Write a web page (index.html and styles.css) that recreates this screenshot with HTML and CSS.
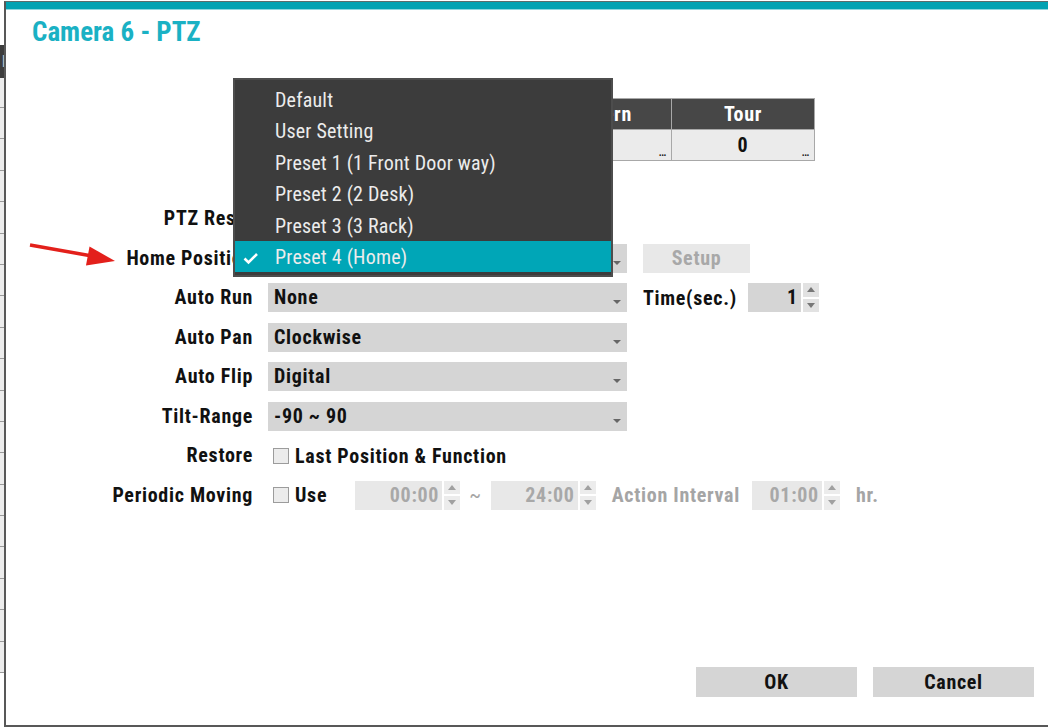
FILE: index.html
```html
<!DOCTYPE html>
<html lang="en">
<head>
  <meta charset="UTF-8" />
  <meta name="viewport" content="width=device-width, initial-scale=1.0"/>
  <title>Camera 6 - PTZ</title>
  <link rel="stylesheet" href="styles.css">
</head>
<body>
  <!-- camera list underneath the dialog -->
  <div class="camera-list">
    <div class="list-head">M</div>
    <div class="list-row"></div><div class="list-row"></div><div class="list-row"></div>
    <div class="list-row"></div><div class="list-row"></div><div class="list-row"></div>
    <div class="list-row"></div><div class="list-row"></div><div class="list-row"></div>
    <div class="list-row"></div><div class="list-row"></div><div class="list-row"></div>
    <div class="list-row"></div><div class="list-row"></div><div class="list-row"></div>
    <div class="list-row"></div><div class="list-row"></div><div class="list-row"></div>
    <div class="list-row"></div>
  </div>

  <div class="dialog">
    <div class="dialog-bar"></div>
    <h1 class="dialog-title">Camera 6 - PTZ</h1>

    <table class="ptz-table">
      <tr><th>Preset</th><th>Pattern</th><th>Tour</th></tr>
      <tr>
        <td>0<span class="more">...</span></td>
        <td>0<span class="more">...</span></td>
        <td>0<span class="more">...</span></td>
      </tr>
    </table>

    <div class="form">
      <div class="label">PTZ Reset</div>
      <div class="field">
        <span class="checkbox"></span>
      </div>

      <div class="label">Home Position</div>
      <div class="field">
        <div class="select">Preset 4 (Home)
          <ul class="menu">
            <li>Default</li>
            <li>User Setting</li>
            <li>Preset 1 (1 Front Door way)</li>
            <li>Preset 2 (2 Desk)</li>
            <li>Preset 3 (3 Rack)</li>
            <li class="is-selected">
              <svg class="tick" width="16" height="13" viewBox="0 0 16 13"><polyline points="1.5,6.5 5.5,10.5 14,2" fill="none" stroke="#fff" stroke-width="2.6"/></svg>
              Preset 4 (Home)
            </li>
          </ul>
        </div>
        <button class="btn btn-setup">Setup</button>
      </div>

      <div class="label">Auto Run</div>
      <div class="field">
        <div class="select">None</div>
        <span class="inline-label">Time(sec.)</span>
        <div class="spin spin-time">
          <div class="spin-value">1</div>
          <div class="spin-arrows"><span class="up"></span><span class="down"></span></div>
        </div>
      </div>

      <div class="label">Auto Pan</div>
      <div class="field"><div class="select">Clockwise</div></div>

      <div class="label">Auto Flip</div>
      <div class="field"><div class="select">Digital</div></div>

      <div class="label">Tilt-Range</div>
      <div class="field"><div class="select">-90 ~ 90</div></div>

      <div class="label">Restore</div>
      <div class="field">
        <span class="checkbox"></span><span class="check-text">Last Position &amp; Function</span>
      </div>

      <div class="label">Periodic Moving</div>
      <div class="field">
        <span class="checkbox"></span><span class="check-text">Use</span>
        <div class="spin is-disabled spin-start">
          <div class="spin-value">00:00</div>
          <div class="spin-arrows"><span class="up"></span><span class="down"></span></div>
        </div>
        <span class="tilde">~</span>
        <div class="spin is-disabled spin-end">
          <div class="spin-value">24:00</div>
          <div class="spin-arrows"><span class="up"></span><span class="down"></span></div>
        </div>
        <span class="inline-label muted">Action Interval</span>
        <div class="spin is-disabled spin-interval">
          <div class="spin-value">01:00</div>
          <div class="spin-arrows"><span class="up"></span><span class="down"></span></div>
        </div>
        <span class="inline-label muted">hr.</span>
      </div>
    </div>

    <div class="dialog-footer">
      <button class="btn btn-main">OK</button>
      <button class="btn btn-main">Cancel</button>
    </div>
  </div>

  <svg class="pointer" width="100" height="40" viewBox="25 235 100 40">
    <line x1="30" y1="245" x2="92" y2="256" stroke="#e3201b" stroke-width="3.5"/>
    <polygon points="89.5,246.5 115,261 86,265.5" fill="#e3201b"/>
  </svg>
</body>
</html>
```

FILE: styles.css
```css
* { margin: 0; padding: 0; box-sizing: border-box; }
body {
  font-family: "Roboto", "Roboto Condensed", sans-serif;
  font-stretch: 87.5%;
  background: #fff;
  color: #111;
  width: 1048px;
  height: 728px;
  overflow: hidden;
  position: relative;
}

/* list behind the modal */
.camera-list {
  width: 200px;
  padding-top: 45px;
}
.list-head {
  height: 33px;
  background: #3d3d3d;
  color: #bbb;
  font-weight: 700;
  padding-left: 2px;
  line-height: 33px;
}
.list-row {
  height: 31.4px;
  background: #ececec;
  border-bottom: 1px solid #9a9a9a;
}
.list-head + .list-row { height: 30px; }

.dialog {
  position: absolute;
  left: 4px;
  top: 1px;
  width: 1060px;
  height: 726px;
  background: #fff;
  border-left: 2px solid #585858;
  border-top: 1px solid #5e6c6c;
  border-bottom: 2px solid #585858;
  display: flex;
  flex-direction: column;
  align-items: flex-start;
}
.dialog-bar {
  align-self: stretch;
  height: 8px;
  background: #02a2b2;
  border-bottom: 1px solid #8fd6dd;
}
.dialog-title {
  font-size: 27px;
  font-weight: 700;
  line-height: 30px;
  color: #1ab1c4;
  padding: 7px 0 0 26px;
}

.ptz-table {
  table-layout: fixed;
  width: 430px;
  border-collapse: collapse;
  margin: 51px 0 0 379px;
  font-size: 20px;
  font-weight: 700;
  letter-spacing: 0.7px;
}
.ptz-table th,
.ptz-table td {
  height: 31px;
  border: 1px solid #a8a8a8;
  text-align: center;
  padding: 0;
}
.ptz-table th {
  background: #474747;
  color: #fff;
}
.ptz-table td {
  background: #ebebeb;
  position: relative;
}
.more {
  position: absolute;
  right: 5px;
  bottom: 3px;
  font-size: 10px;
  line-height: 8px;
  letter-spacing: -0.5px;
}

.form {
  align-self: stretch;
  display: grid;
  grid-template-columns: 193px 1fr;
  grid-auto-rows: 29px;
  column-gap: 15px;
  row-gap: 10.5px;
  margin: 43px 0 0 54px;
  font-size: 20px;
  font-weight: 700;
  letter-spacing: 0.7px;
}
.label {
  text-align: right;
  line-height: 29px;
  white-space: nowrap;
}
.field {
  display: flex;
  align-items: center;
  white-space: nowrap;
}

.select {
  position: relative;
  flex: none;
  width: 359px;
  height: 29px;
  line-height: 29px;
  padding-left: 6px;
  background: #d5d5d5;
}
.select::after {
  content: "";
  position: absolute;
  right: 6px;
  bottom: 8px;
  border-left: 4px solid transparent;
  border-right: 4px solid transparent;
  border-top: 4px solid #666;
}

.menu {
  position: absolute;
  left: -35px;
  top: -166px;
  width: 380px;
  padding: 3.75px 0 2.75px;
  list-style: none;
  background: #3c3c3c;
  border: 2px solid #4d4d4d;
  z-index: 10;
  letter-spacing: 0.2px;
}
.menu li {
  position: relative;
  height: 31.5px;
  line-height: 31.5px;
  padding: 1.5px 0 0 40px;
  font-weight: 400;
  color: #ececec;
}
.menu li.is-selected { background: #00a6b7; }
.tick {
  position: absolute;
  left: 8px;
  top: 11px;
}

.btn {
  font-family: inherit;
  font-stretch: inherit;
  letter-spacing: 0.7px;
  font-size: 20px;
  font-weight: 700;
  border: none;
  height: 29px;
}
.btn-setup {
  width: 107px;
  margin-left: 16px;
  background: #e8e8e8;
  color: #a8a8a8;
}

.inline-label { margin-left: 16px; }
.muted { color: #a5a5a5; }

.checkbox {
  flex: none;
  width: 16px;
  height: 16px;
  margin: 0 6px 0 5px;
  background: #ececec;
  border: 1px solid #9c9c9c;
}

.spin {
  display: flex;
  gap: 2px;
  height: 29px;
}
.spin-value {
  background: #d5d5d5;
  text-align: right;
  line-height: 29px;
  padding-right: 3px;
}
.spin-arrows {
  display: flex;
  flex-direction: column;
  gap: 2px;
  width: 16px;
}
.spin-arrows span {
  flex: 1;
  background: #e2e2e2;
  position: relative;
}
.spin-arrows span::after {
  content: "";
  position: absolute;
  left: 4px;
  top: 4px;
  border-left: 4px solid transparent;
  border-right: 4px solid transparent;
}
.spin-arrows .up::after { border-bottom: 5px solid #777; }
.spin-arrows .down::after { border-top: 5px solid #777; }

.spin-time { margin-left: 11px; }
.spin-time .spin-value { width: 53px; }

.spin.is-disabled .spin-value {
  background: #e8e8e8;
  color: #a8a8a8;
}
.spin.is-disabled .spin-arrows span { background: #ececec; }
.spin.is-disabled .up::after { border-bottom-color: #a0a0a0; }
.spin.is-disabled .down::after { border-top-color: #a0a0a0; }

.spin-start { margin-left: 28px; }
.spin-start .spin-value,
.spin-end .spin-value { width: 87px; }
.spin-interval { margin-left: 12px; }
.spin-interval .spin-value { width: 70px; }
.tilde {
  color: #a5a5a5;
  font-weight: 400;
  margin: 0 9px;
}

.dialog-footer {
  align-self: stretch;
  margin-top: auto;
  display: flex;
  justify-content: flex-end;
  gap: 16px;
  padding: 0 30px 28px 0;
}
.btn-main {
  width: 161px;
  height: 30px;
  background: #d5d5d5;
  color: #111;
}

.pointer {
  position: absolute;
  left: 25px;
  top: 235px;
}
```
